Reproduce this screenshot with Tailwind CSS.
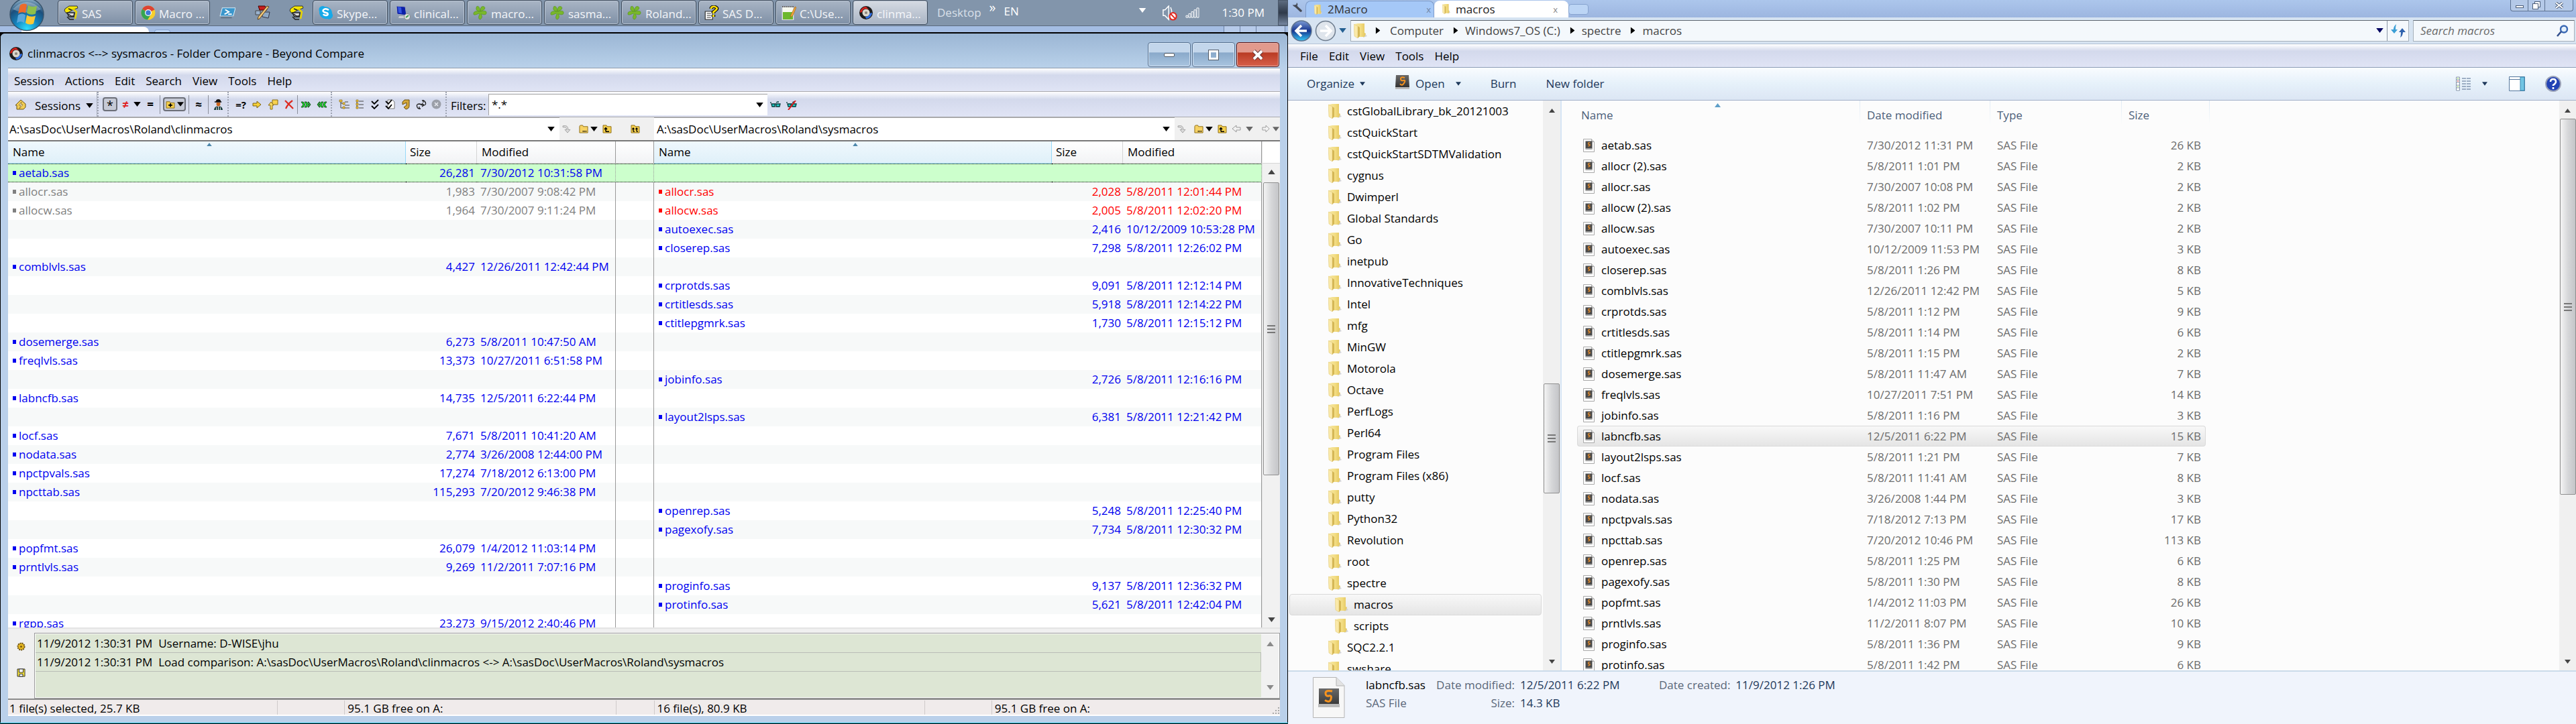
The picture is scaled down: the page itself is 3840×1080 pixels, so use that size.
<!DOCTYPE html>
<html lang="en">
<head>
<meta charset="utf-8">
<title>clinmacros &lt;--&gt; sysmacros - Folder Compare</title>
<script src="https://cdn.jsdelivr.net/npm/@tailwindcss/browser@4"></script>
</head>
<body class="h-screen overflow-hidden bg-[#fcfcfc] font-['Open_Sans','Noto_Sans',sans-serif] text-[17px] leading-6 text-black">

<!-- Icon sprite -->
<svg class="absolute h-0 w-0" aria-hidden="true">
  <defs>
    <linearGradient id="gFold" x1="0" x2="1"><stop offset="0" stop-color="#f6e7a4"/><stop offset=".55" stop-color="#f3dd83"/><stop offset="1" stop-color="#e3c55c"/></linearGradient>
    <radialGradient id="gOrb" cx=".5" cy=".95" r=".9"><stop offset="0" stop-color="#2fe0ff"/><stop offset=".4" stop-color="#1583bd"/><stop offset=".75" stop-color="#1c4f7c"/><stop offset="1" stop-color="#7fa3bd"/></radialGradient>
    <linearGradient id="gBack" x1="0" x2="0" y1="0" y2="1"><stop offset="0" stop-color="#7d9cd6"/><stop offset=".5" stop-color="#16358f"/><stop offset="1" stop-color="#35c8f5"/></linearGradient>
    <linearGradient id="gDark" x1="0" x2="0" y1="0" y2="1"><stop offset="0" stop-color="#6a6a6a"/><stop offset="1" stop-color="#333"/></linearGradient>
  </defs>
  <symbol id="tri" viewBox="0 0 12 8"><path d="M0 0h12L6 8z" fill="currentColor"/></symbol>
  <symbol id="triup" viewBox="0 0 12 8"><path d="M0 8h12L6 0z" fill="currentColor"/></symbol>
  <symbol id="orb" viewBox="0 0 52 48" preserveAspectRatio="none"><ellipse cx="26" cy="22" rx="25" ry="24.500" fill="url(#gOrb)" stroke="#38546c" stroke-width="1.500"/><path d="M5 14Q26-8 47 14 26 24 5 14z" fill="#fff" opacity=".3"/><path d="M16 8q5-4 10-1l-2 13q-6-3-11 1z" fill="#ec6a2c"/><path d="M28 8q6 4 13 1l-2 12q-7 3-13-1z" fill="#8fc04a"/><path d="M13 23q6-4 11 0l-2 12q-5-4-11 0z" fill="#5ba7dc"/><path d="M26 23q6 4 13 1l-3 12q-6 3-12-1z" fill="#fdc835"/></symbol>
  <symbol id="sas" viewBox="0 0 22 22" preserveAspectRatio="none"><path d="M2 5 8 1h12l1 3-8 3-9 5-3-4z" fill="#f4e600" stroke="#333"/><path d="M5 11h11l-1 6H8z" fill="#ddd" stroke="#222" stroke-width="1.600"/><path d="m7 5 5 2M7 13l4 3h5M5 17l4 4h6" stroke="#222" stroke-width="1.500" fill="none"/><path d="m14 5 5 5-2 10" stroke="#e6d300" stroke-width="2.500" fill="none"/></symbol>
  <symbol id="chrome" viewBox="0 0 22 22"><circle cx="11" cy="11" r="10.500" fill="#f7cf2d"/><path d="M11 11 2 5.500A10.500 10.500 0 0 1 20.500 6.500z" fill="#dd4332"/><path d="M11 11 2 5.500A10.500 10.500 0 0 0 10 21.500l5-8z" fill="#35a552"/><circle cx="11" cy="11" r="5" fill="#fff"/><circle cx="11" cy="11" r="3.800" fill="#3e79d6"/></symbol>
  <symbol id="psh" viewBox="0 0 22 22" preserveAspectRatio="none"><path d="M4 2h18l-3 14H1z" fill="#3a96cc" stroke="#d7ecf8"/><path d="m8 5 5 4-6 4M12 13h5" stroke="#fff" stroke-width="2" fill="none"/><path d="M2 19h15" stroke="#5d6f80" stroke-width="2"/></symbol>
  <symbol id="paint" viewBox="0 0 26 22" preserveAspectRatio="none"><path d="M3 8h7v6H3z" fill="#9ab3cf" stroke="#444"/><path d="M7 1h10l3 6H9z" fill="#c81f1c" stroke="#400"/><path d="M13 10h11l-2 9-9-2z" fill="#8fa9c4" stroke="#334"/><path d="M23 2 9 20l-3 1 1-4L20 1z" fill="#efc679" stroke="#5d4420"/></symbol>
  <symbol id="skype" viewBox="0 0 22 22" preserveAspectRatio="none"><path d="M6 1a5.500 5.500 0 0 0-5 8 10 10 0 0 0 12 11 5.500 5.500 0 0 0 7-8A10 10 0 0 0 9 2a5 5 0 0 0-3-1z" fill="#17a9e8"/><path d="M15 7q-4-3-7-1t0 4l5 1.500q2 3-2 3.500-3 0-4-2" stroke="#fff" stroke-width="2.600" fill="none"/></symbol>
  <symbol id="mon" viewBox="0 0 22 22" preserveAspectRatio="none"><path d="m1 1 13 1 2 13-14-2z" fill="#0c1fa8" stroke="#9fa8b8"/><path d="m3 2 5 1 1 9-5-1z" fill="#3456e2"/><path d="M5 16h9l2 3H4z" fill="#c8ccd2"/><circle cx="17" cy="17" r="4.500" fill="#dfe2e4" stroke="#888"/><path d="m15 18 4-3" stroke="#3a9a4a" stroke-width="2"/></symbol>
  <symbol id="clover" viewBox="0 0 24 24" preserveAspectRatio="none"><g fill="#79b82b" stroke="#4f8c17" stroke-width=".6"><path d="M11 10Q3 9 6 2q4-3 6 7 0-9 6-7 5 4-6 8z"/><path d="M11 10Q2 8 1 13t9 0l1 1q-4 8 1 9 5-4 1-9 9 3 9-2t-10-2z"/></g></symbol>
  <symbol id="qdoc" viewBox="0 0 18 22" preserveAspectRatio="none"><path d="M1 9h9v12H1z" fill="#fff" stroke="#333"/><path d="M3 12h5M3 15h5M3 18h5" stroke="#333"/><path d="M8 5q1-4 5-3 4 2 1 5l-3 3v2M11 14v3" stroke="#000" stroke-width="4.500" fill="none"/><path d="M8 5q1-4 5-3 4 2 1 5l-3 3v2M11 14v3" stroke="#fd0" stroke-width="2.500" fill="none"/></symbol>
  <symbol id="npp" viewBox="0 0 22 22" preserveAspectRatio="none"><path d="M1 2h17v20H1z" fill="#f6f8ef" stroke="#ccd"/><path d="M2 10h15v11H2z" fill="#6db82e"/><path d="M1 2h17" stroke="#666" stroke-width="2" stroke-dasharray="2 1"/><path d="M20 2 14 14l-1 4 4-3 5-12z" fill="#f0a63a" stroke="#9a5d12" stroke-width=".6"/></symbol>
  <symbol id="bc" viewBox="0 0 22 22" preserveAspectRatio="none"><circle cx="11" cy="11" r="10" fill="#1b1b1b"/><path d="M11 2A9 9 0 0 0 2 11l3-1a6 6 0 0 1 6-5l4 1z" fill="#d9221c"/><path d="M20 11a9 9 0 0 1-9 9l-1-3a6 6 0 0 0 6-5z" fill="#2f6fe6"/><circle cx="11" cy="11" r="5.500" fill="#d9d6cc"/><circle cx="11" cy="11" r="2" fill="#8a857a"/></symbol>
  <symbol id="vol" viewBox="0 0 24 24" preserveAspectRatio="none"><path d="M1 7h3l6-6v21l-6-6H1zM13 3q4 8 0 17" fill="none" stroke="#fff" stroke-width="1.600"/><circle cx="17" cy="17" r="5.500" fill="#fff" stroke="#e3271f" stroke-width="2.200"/><path d="m13 13 8 8" stroke="#e3271f" stroke-width="2.200"/></symbol>
  <symbol id="sig" viewBox="0 0 22 17" preserveAspectRatio="none"><path d="M1 13h3v3H1zM5 10h3v6H5zM9 7h3v9H9zM13 4h3v12h-3zM17 1h3v15h-3z" fill="none" stroke="#fff"/></symbol>
  <symbol id="folder" viewBox="0 0 20 22" preserveAspectRatio="none"><path d="m14 12 6 7-6 2z" fill="#d4d4d4"/><path d="M1 1 6 0h10v14l2 1-2 5H6z" fill="url(#gFold)"/><path d="m0 1 6 3v18l-5-3z" fill="#fae9a8" stroke="#dcc478" stroke-width=".5"/><path d="M6 4v18l3-3V6z" fill="#d5b755"/></symbol>
  <symbol id="file" viewBox="0 0 17 20" preserveAspectRatio="none"><path d="M.5.5h12l4 4v15H.5z" fill="#fcfcfc" stroke="#a9a9a9"/><path d="M12.500.5v4h4" fill="#ddd" stroke="#aaa"/><path d="M3.500 3.500h10v11h-10z" fill="#4a4a4a"/><path d="M3.500 14h10v2h-10z" fill="#a3a3a3"/><path d="M10.500 6q-3-1-3 1t2.500 1.500Q11 11 7 11" stroke="#f0902a" stroke-width="1.200" fill="none"/></symbol>
  <symbol id="bigfile" viewBox="0 0 48 61" preserveAspectRatio="none"><path d="M.5.5H35l12 12v48H.5z" fill="#f7f7f7" stroke="#b4b4b4"/><path d="M35 .5V13h12" fill="#e3e3e3" stroke="#b4b4b4"/><path d="M9 17h30v27H9z" fill="url(#gDark)"/><path d="M8 40h32v5H8z" fill="#bbb"/><path d="M29 21q-10-2-10 3t5 4 3 5-9 1.500" stroke="#f7931e" stroke-width="3" fill="none"/></symbol>
  <symbol id="sopen" viewBox="0 0 23 22" preserveAspectRatio="none"><path d="M2 0h19l1 18H1z" fill="url(#gDark)"/><path d="M1 18h21v3H1z" fill="#b9b9b9"/><path d="M15 4q-6-2-6 1.500t4 2.500 1 4-6 1" stroke="#f7931e" stroke-width="2" fill="none"/></symbol>
  <symbol id="house" viewBox="0 0 18 16" preserveAspectRatio="none"><path d="M9 1 1 9h2v6h10l3-3V7z" fill="#f2cd55" stroke="#6d5415"/><path d="M10 4 6 9h3l-2 5 5-6H9z" fill="#fff" stroke="#7a5c10" stroke-width=".7"/></symbol>
  <symbol id="fplus" viewBox="0 0 14 14" preserveAspectRatio="none"><path d="M1 2h5l1 2h6v9H1z" fill="#f4cf4c" stroke="#8d6c17"/><path d="M7 5v6M4 8h6" stroke="#000" stroke-width="1.800"/></symbol>
  <symbol id="fup" viewBox="0 0 14 14" preserveAspectRatio="none"><path d="M1 1h5l1 2h6v10H1z" fill="#f4cf4c" stroke="#8d6c17"/><path d="M5 11V6M3 7.500 5 5l2 2.500M5 11h5" stroke="#000" stroke-width="1.500" fill="none"/></symbol>
  <symbol id="fupup" viewBox="0 0 14 14" preserveAspectRatio="none"><path d="M1 1h5l1 2h6v10H1z" fill="#f4cf4c" stroke="#8d6c17"/><path d="M4 11V6M2.500 7.500 4 5.500l1.500 2M4 11h2M9 11V6M7.500 7.500 9 5.500l1.500 2M9 11h2" stroke="#000" stroke-width="1.300" fill="none"/></symbol>
  <symbol id="person" viewBox="0 0 16 17" preserveAspectRatio="none"><path d="M4 5q0-4 4-4t4 4z" fill="#111"/><path d="M2 5h11" stroke="#111" stroke-width="1.500"/><path d="M5 6h6v4q-3 3-6 0z" fill="#c9631c"/><path d="M1 17q1-6 7-5 6-1 7 5z" fill="#163a3a"/><path d="M5 13v4M8 12v5M11 13v4" stroke="#eee"/></symbol>
  <symbol id="rarrow" viewBox="0 0 14 12" preserveAspectRatio="none"><path d="M1 4h6V1l6 5-6 5V8H1z" fill="#f6d038" stroke="#7c6210"/></symbol>
  <symbol id="farrow" viewBox="0 0 16 16" preserveAspectRatio="none"><path d="M7 1h8v7H7z" fill="#f7d250" stroke="#8a6b15"/><path d="m1 9 4-5 4 5H7v6H4V9z" fill="#f9dc61" stroke="#8a6b15"/></symbol>
  <symbol id="redx" viewBox="0 0 14 14" preserveAspectRatio="none"><path d="m1 1 12 12M12 1Q5 6 2 13" stroke="#dd2a20" stroke-width="2.200" fill="none"/></symbol>
  <symbol id="right3" viewBox="0 0 16 10" preserveAspectRatio="none"><path d="m1 1 3 4-3 4h3l3-4-3-4zM6 1l3 4-3 4h3l3-4-3-4zM11 1h1l3 4-3 4h-1l2-4z" fill="#18e02a" stroke="#06340a" stroke-width=".8"/></symbol>
  <symbol id="left3" viewBox="0 0 16 10" preserveAspectRatio="none"><path d="m15 1-3 4 3 4h-3L9 5l3-4zM10 1 7 5l3 4H7L4 5l3-4zM5 1H4L1 5l3 4h1L3 5z" fill="#18e02a" stroke="#06340a" stroke-width=".8"/></symbol>
  <symbol id="tree" viewBox="0 0 16 15" preserveAspectRatio="none"><path d="M3 3v10h5M3 6h5M9 9h7M9 13h7M9 4h5" stroke="#444" fill="none"/><path d="M1 1h4v3H1zM6 5h3v3H6zM6 11h3v3H6z" fill="#f4c63c" stroke="#8a6b15" stroke-width=".7"/></symbol>
  <symbol id="tree2" viewBox="0 0 12 15" preserveAspectRatio="none"><path d="M5 3h7M5 8h7M5 13h7M2 3v10" stroke="#444"/><path d="M1 1h3v3H1zM1 6h3v3H1zM1 11h3v3H1z" fill="#f4c63c" stroke="#8a6b15" stroke-width=".7"/></symbol>
  <symbol id="checks" viewBox="0 0 12 15" preserveAspectRatio="none"><path d="m1 3 4 4 6-6M1 10l4 4 6-6" stroke="#000" stroke-width="1.800" fill="none"/></symbol>
  <symbol id="dchecks" viewBox="0 0 15 15" preserveAspectRatio="none"><path d="M4 1h7l3 3v10H4z" fill="#fff" stroke="#777"/><path d="m1 3 4 4 5-6M1 10l4 4 5-6" stroke="#000" stroke-width="1.800" fill="none"/></symbol>
  <symbol id="undo" viewBox="0 0 12 16" preserveAspectRatio="none"><path d="M4 1h7v9q0 4-5 5L3 12l4-3V5L1 8V4z" fill="#d5a83a" stroke="#6b4f10"/></symbol>
  <symbol id="cycle" viewBox="0 0 16 14" preserveAspectRatio="none"><path d="M2 11q-2-5 3-5l4 1M14 3q2 5-3 5L7 7M9 1q4-1 5 3M7 13q-4 1-5-2M9 5l3 3-3 2M5 10v4M11 0v4" stroke="#222" stroke-width="1.300" fill="none"/></symbol>
  <symbol id="stop" viewBox="0 0 15 15"><circle cx="7.500" cy="7.500" r="7" fill="#9b9fa8"/><path d="m5 5 5 5M10 5l-5 5" stroke="#e6e8ee" stroke-width="1.600"/></symbol>
  <symbol id="glass" viewBox="0 0 16 9" preserveAspectRatio="none"><path d="M1 3V1M2 4h5v4H3zM9 4h6l-1 4H9zM7 4h2M9 2l2-1h2" fill="#21cfc9" stroke="#063a3a" stroke-width="1.300"/></symbol>
  <symbol id="darrow" viewBox="0 0 14 14" preserveAspectRatio="none"><path d="M1 2q8-2 8 6h3l-4 5-4-5h3Q7 4 1 4z" fill="#dcdcdc" stroke="#a3a3a3"/></symbol>
  <symbol id="fold" viewBox="0 0 15 14" preserveAspectRatio="none"><path d="M1 3q0-2 2-2h3l1 2h7v10H1z" fill="#f6d264" stroke="#8a6b15"/><path d="M6 10.500h6" stroke="#000" stroke-width="1.500" stroke-dasharray="1.500 .8"/></symbol>
  <symbol id="outarrow" viewBox="0 0 14 12" preserveAspectRatio="none"><path d="M13 4H7V1L1 6l6 5V8h6z" fill="#f2f2f2" stroke="#999"/></symbol>
  <symbol id="gear" viewBox="0 0 13 13"><circle cx="6.500" cy="6.500" r="5" fill="#e8b922" stroke="#6e5210" stroke-width="2" stroke-dasharray="2 1"/><circle cx="6.500" cy="6.500" r="1.600" fill="#7b5c12"/></symbol>
  <symbol id="save" viewBox="0 0 13 13"><path d="M1 1h11v11H1z" fill="#f5e23a" stroke="#333"/><path d="M3.500 1h6v5h-6zM4 8.500h5V12H4z" fill="#fff" stroke="#333"/></symbol>
  <symbol id="wrench" viewBox="0 0 16 16" preserveAspectRatio="none"><path d="M5 6 13 14" stroke="#444a55" stroke-width="3.500" stroke-linecap="round"/><path d="M1 4a4 4 0 0 0 6 3 4 4 0 0 0 0-6L6 5H3z" fill="#444a55"/></symbol>
</svg>

<div class="flex h-full w-full">

  <!-- Left monitor -->
  <section class="flex min-w-0 flex-1 flex-col overflow-hidden bg-black">

    <!-- Taskbar -->
    <nav class="relative z-10 flex h-[38px] shrink-0 items-stretch bg-[#8295ab] pl-[86px] text-[#f4f6fa]">
      <button aria-label="Start" class="absolute left-[14px] top-0 h-[47px] w-[52px]"><svg class="h-[47px] w-[52px]"><use href="#orb"/></svg></button>
      <div class="flex gap-[3px]" id="tasks1"></div>
      <div class="flex w-[153px] items-center justify-around">
        <button aria-label="PowerShell"><svg class="h-[19px] w-6"><use href="#psh"/></svg></button>
        <button aria-label="Paint"><svg class="h-[22px] w-[26px]"><use href="#paint"/></svg></button>
        <button aria-label="SAS"><svg class="h-[22px] w-[22px]"><use href="#sas"/></svg></button>
      </div>
      <div class="flex gap-[3px]" id="tasks2"></div>
      <div class="ml-[14px] flex items-center gap-3 text-[#d9e0e9]"><span>Desktop</span><span class="pb-4 text-[20px] text-white">»</span><span class="pb-1 text-white">EN</span></div>
      <div class="ml-auto flex items-center text-white">
        <svg class="mb-2 mr-6 h-[7px] w-3"><use href="#tri"/></svg>
        <svg class="mr-3 h-[23px] w-[22px]"><use href="#vol"/></svg>
        <svg class="mr-8 h-4 w-[22px]"><use href="#sig"/></svg>
        <time class="mr-5">1:30 PM</time>
        <button aria-label="Show desktop" class="h-[38px] w-[15px] border border-[#4a586a] bg-linear-to-b from-[#5d6c80] via-[#2f3a4a] to-[#7687a0]"></button>
      </div>
    </nav>

    <!-- Strip of the window behind -->
    <div class="flex h-[10px] shrink-0 items-end border-t border-[#5b6b80] bg-[#a4bde3] pl-8">
      <div class="h-2 w-[190px] rounded-t-lg bg-white"></div>
      <div class="ml-2 h-1 w-6 rounded-t border border-b-0 border-[#88a5d0] bg-[#bcd4f3]"></div>
      <div class="ml-auto mr-1 flex h-[9px] w-[92px] divide-x divide-[#6d82a5] border-x border-[#6d82a5] bg-[#b7cbea]"><span class="w-6"></span><span class="w-6"></span><span class="flex-1"></span></div>
    </div>

    <!-- Beyond Compare -->
    <main class="flex min-h-0 flex-1 flex-col rounded-t-lg border-x border-t-2 border-black bg-[#bad0ea]">
      <header class="flex h-[51px] shrink-0 items-center rounded-t-md bg-linear-to-b from-[#9bb6d4] to-[#b9d1ea] pl-3 pr-3">
        <svg class="mt-2 h-[22px] w-[22px]"><use href="#bc"/></svg>
        <h1 class="ml-[6px] mt-2">clinmacros &lt;--&gt; sysmacros - Folder Compare - Beyond Compare</h1>
        <div class="ml-auto mt-3 flex gap-[2px]">
          <button aria-label="Minimize" class="flex h-[37px] w-16 items-center justify-center rounded-sm border border-[#56708f] bg-linear-to-b from-[#c3d6eb] from-40% via-[#8aa9ca] via-42% to-[#a9c5e0] shadow-[inset_0_0_0_1px_#d6e5f4]"><span class="h-[6px] w-4 rounded-xs border border-[#535b66] bg-white"></span></button>
          <button aria-label="Maximize" class="flex h-[37px] w-16 items-center justify-center rounded-sm border border-[#56708f] bg-linear-to-b from-[#c3d6eb] from-40% via-[#8aa9ca] via-42% to-[#a9c5e0] shadow-[inset_0_0_0_1px_#d6e5f4]"><span class="h-4 w-4 border border-[#535b66] p-[3px] shadow-[inset_0_0_0_3px_#fff]"></span></button>
          <button aria-label="Close" class="flex h-[37px] w-16 items-center justify-center rounded-sm border border-[#5a1212] bg-linear-to-b from-[#e29a8d] from-40% via-[#b93a22] via-42% to-[#d7604b] shadow-[inset_0_0_0_1px_#eab2a8]"><svg viewBox="0 0 18 16" class="h-4 w-[18px]"><path d="m3 2 12 12M15 2 3 14" stroke="#5c3030" stroke-width="6"/><path d="m3 2 12 12M15 2 3 14" stroke="#fff" stroke-width="4"/></svg></button>
        </div>
      </header>

      <div class="mx-[11px] mb-[10px] flex min-h-0 flex-1 flex-col overflow-hidden border-t border-[#8f9cad] bg-[#f0f0f0]">
        <!-- Menu -->
        <nav class="flex h-[35px] shrink-0 items-center gap-4 border-b border-[#a9a9ad] bg-linear-to-b from-white via-[#d3d9ec] via-30% to-[#e0e4f5] pl-[9px] pt-1">
          <button>Session</button><button>Actions</button><button>Edit</button><button>Search</button><button>View</button><button>Tools</button><button>Help</button>
        </nav>

        <!-- Toolbar -->
        <div class="flex h-[38px] shrink-0 items-center border-b border-[#a9a9ad] bg-linear-to-b from-white via-[#d3d9ec] via-30% to-[#e0e4f5]">
          <div class="flex h-full w-[133px] items-center border-r border-[#a9aebc] pl-[10px]">
            <svg class="h-4 w-[18px]"><use href="#house"/></svg>
            <button class="ml-3 flex items-center gap-2 pt-1">Sessions<svg class="h-[7px] w-[11px] shrink-0"><use href="#tri"/></svg></button>
          </div>
          <div class="flex h-full w-[194px] items-center border-l-2 border-dotted border-[#9ea3b2] pl-[6px]">
            <button class="h-[21px] w-[22px] rounded border-2 border-[#6c6f78] bg-[#c6cad6] text-[18px] leading-5">*</button>
            <button class="w-6 font-bold text-[#e02020]">≠</button>
            <button aria-label="Differences menu" class="w-[11px]"><svg class="h-[7px] w-[11px]"><use href="#tri"/></svg></button>
            <button class="w-7 font-bold">=</button>
            <span class="mr-1 h-7 w-px bg-[#8b8f9b]"></span>
            <button aria-label="Folder view" class="flex h-[21px] w-[34px] items-center justify-around rounded border-2 border-[#6c6f78] bg-[#c6cad6]"><svg class="h-3 w-[14px]"><use href="#fplus"/></svg><svg class="h-[7px] w-[10px]"><use href="#tri"/></svg></button>
            <span class="ml-1 h-7 w-px bg-[#8b8f9b]"></span>
            <button class="w-7 font-bold">≈</button>
            <span class="h-7 w-px bg-[#8b8f9b]"></span>
            <button aria-label="Rules" class="flex w-7 justify-center"><svg class="h-[17px] w-[15px]"><use href="#person"/></svg></button>
          </div>
          <div class="flex h-full w-[154px] items-center border-l-2 border-dotted border-[#9ea3b2] pl-[6px]">
            <button class="w-6 text-[15px] font-bold">=?</button>
            <button aria-label="Copy" class="flex w-6 justify-center"><svg class="h-3 w-[14px]"><use href="#rarrow"/></svg></button>
            <button aria-label="Copy to folder" class="flex w-6 justify-center"><svg class="h-4 w-4"><use href="#farrow"/></svg></button>
            <button aria-label="Delete" class="flex w-6 justify-center"><svg class="h-[14px] w-[14px]"><use href="#redx"/></svg></button>
            <span class="h-7 w-px bg-[#8b8f9b]"></span>
            <button aria-label="Mirror right" class="flex w-6 justify-center"><svg class="h-[10px] w-4"><use href="#right3"/></svg></button>
            <button aria-label="Mirror left" class="flex w-6 justify-center"><svg class="h-[10px] w-4"><use href="#left3"/></svg></button>
          </div>
          <div class="flex h-full w-[171px] items-center border-l-2 border-dotted border-[#9ea3b2] pl-[6px]">
            <button aria-label="Expand all" class="flex w-[23px] justify-center"><svg class="h-[15px] w-4"><use href="#tree"/></svg></button>
            <button aria-label="Collapse all" class="flex w-[23px] justify-center"><svg class="h-[15px] w-3"><use href="#tree2"/></svg></button>
            <button aria-label="Select all" class="flex w-[23px] justify-center"><svg class="h-[15px] w-3"><use href="#checks"/></svg></button>
            <button aria-label="Select files" class="flex w-[23px] justify-center"><svg class="h-[15px] w-[15px]"><use href="#dchecks"/></svg></button>
            <button aria-label="Refresh" class="flex w-[23px] justify-center"><svg class="h-4 w-3"><use href="#undo"/></svg></button>
            <button aria-label="Swap sides" class="flex w-[23px] justify-center"><svg class="h-[14px] w-4"><use href="#cycle"/></svg></button>
            <button aria-label="Stop" class="flex w-[23px] justify-center"><svg class="h-[15px] w-[15px]"><use href="#stop"/></svg></button>
          </div>
          <div class="flex h-full items-center border-l-2 border-dotted border-[#9ea3b2] pl-[6px]">
            <label for="filters" class="w-14 pt-1">Filters:</label>
            <div class="flex h-8 w-[416px] items-center border-l border-t border-[#a2a2a2] bg-white pr-[6px]">
              <input id="filters" value="*.*" class="min-w-0 flex-1 bg-transparent pl-1 outline-none">
              <svg class="h-[7px] w-[11px]"><use href="#tri"/></svg>
            </div>
            <button aria-label="Show filters" class="ml-1"><svg class="h-[9px] w-4"><use href="#glass"/></svg></button>
            <button aria-label="Hide filters" class="relative ml-2"><svg class="h-[9px] w-4"><use href="#glass"/></svg><svg viewBox="0 0 16 14" class="absolute -top-px left-0 h-[14px] w-4"><path d="M3 14 14 0" stroke="#e01818" stroke-width="2"/></svg></button>
          </div>
        </div>

        <!-- Paths -->
        <div class="flex h-9 shrink-0 items-stretch border-b-2 border-[#777]">
          <div class="flex flex-1">
            <div class="flex flex-1 items-center border-t border-[#a8a8a8] bg-white pr-[7px]">
              <input aria-label="Left folder" value="A:\sasDoc\UserMacros\Roland\clinmacros" class="min-w-0 flex-1 bg-transparent pl-[2px] outline-none"><svg class="h-[7px] w-[11px]"><use href="#tri"/></svg>
            </div>
            <div class="flex w-[84px] items-center gap-[7px] pl-1">
              <svg class="h-[13px] w-[14px]"><use href="#darrow"/></svg><svg class="ml-1 h-[13px] w-[14px]"><use href="#fold"/></svg><svg class="-ml-1 h-[7px] w-[11px]"><use href="#tri"/></svg><svg class="h-[13px] w-[14px]"><use href="#fup"/></svg>
            </div>
          </div>
          <div class="flex w-[57px] items-center justify-center"><svg class="h-[13px] w-[14px]"><use href="#fupup"/></svg></div>
          <div class="flex flex-1">
            <div class="flex flex-1 items-center border-t border-[#a8a8a8] bg-white pr-[7px]">
              <input aria-label="Right folder" value="A:\sasDoc\UserMacros\Roland\sysmacros" class="min-w-0 flex-1 bg-transparent pl-1 outline-none"><svg class="h-[7px] w-[11px]"><use href="#tri"/></svg>
            </div>
            <div class="flex w-[130px] items-center gap-[7px] pl-1">
              <svg class="h-[13px] w-[14px]"><use href="#darrow"/></svg><svg class="ml-1 h-[13px] w-[14px]"><use href="#fold"/></svg><svg class="-ml-1 h-[7px] w-[11px]"><use href="#tri"/></svg><svg class="h-[13px] w-[14px]"><use href="#fup"/></svg><svg class="h-3 w-[14px]"><use href="#outarrow"/></svg><svg class="h-[7px] w-[11px] text-[#666]"><use href="#tri"/></svg>
            </div>
          </div>
          <div class="flex w-[27px] items-center gap-1"><svg class="h-3 w-3 rotate-180"><use href="#outarrow"/></svg><svg class="h-[7px] w-[10px] text-[#666]"><use href="#tri"/></svg></div>
        </div>

        <!-- Comparison -->
        <div class="flex min-h-0 flex-1 overflow-hidden bg-white">
          <div class="min-w-0 flex-1 overflow-hidden">
            <table class="w-full table-fixed border-separate border-spacing-0">
              <colgroup><col><col class="w-[106px]"><col class="w-[207px]"><col class="w-[57px]"><col><col class="w-[106px]"><col class="w-[207px]"></colgroup>
              <thead>
                <tr class="h-[33px] text-left">
                  <th class="relative border-b border-r border-[#96d9f9] bg-linear-to-b from-[#eff8fd] to-[#dff0f9] pl-[7px] font-normal">Name<svg class="absolute left-1/2 top-[2px] h-[5px] w-2 text-[#4d87ab]"><use href="#triup"/></svg></th>
                  <th class="border-b border-r border-[#d5d5d5] bg-linear-to-b from-white to-[#f2f3f5] pl-[6px] font-normal">Size</th>
                  <th class="border-b border-r border-b-[#d5d5d5] border-r-[#999] bg-linear-to-b from-white to-[#f2f3f5] pl-[7px] font-normal">Modified</th>
                  <th class="border-b border-r border-b-[#d5d5d5] border-r-[#999] bg-linear-to-b from-white to-[#f2f3f5]"></th>
                  <th class="relative border-b border-r border-[#96d9f9] bg-linear-to-b from-[#eff8fd] to-[#dff0f9] pl-[7px] font-normal">Name<svg class="absolute left-1/2 top-[2px] h-[5px] w-2 text-[#4d87ab]"><use href="#triup"/></svg></th>
                  <th class="border-b border-r border-[#d5d5d5] bg-linear-to-b from-white to-[#f2f3f5] pl-[6px] font-normal">Size</th>
                  <th class="border-b border-r border-b-[#d5d5d5] border-r-[#999] bg-linear-to-b from-white to-[#f2f3f5] pl-[7px] font-normal">Modified</th>
                </tr>
              </thead>
              <tbody id="cmp"></tbody>
            </table>
          </div>
          <div class="flex w-[27px] flex-col items-center border-l border-[#e2e2e2] bg-[#f1f1f1]">
            <div class="h-[33px] w-full shrink-0 border-b border-[#d5d5d5] bg-white"></div>
            <svg class="mt-[9px] h-[7px] w-[11px] shrink-0 text-[#444]"><use href="#triup"/></svg>
            <div class="mt-3 flex h-[437px] w-6 flex-col items-center justify-center gap-[3px] rounded-xs border border-[#8f8f8f] bg-linear-to-r from-[#f4f4f4] via-[#d6d7d9] to-[#c4c5c8]"><i class="h-[2px] w-3 bg-[#777]"></i><i class="h-[2px] w-3 bg-[#777]"></i><i class="h-[2px] w-3 bg-[#777]"></i></div>
            <svg class="mb-2 mt-auto h-[7px] w-[11px] shrink-0 text-[#444]"><use href="#tri"/></svg>
          </div>
        </div>

        <!-- Log -->
        <div class="flex h-[108px] shrink-0 border-b-2 border-t-2 border-b-[#8d8d8d] border-t-[#e4e4e4] pt-[6px]">
          <div class="flex w-[39px] flex-col items-center gap-[26px] pt-[14px]"><svg class="h-[13px] w-[13px]"><use href="#gear"/></svg><svg class="h-[13px] w-[13px]"><use href="#save"/></svg></div>
          <div class="flex flex-1 border border-[#9a9a9a] bg-white p-px">
            <div class="flex-1 bg-[#dde6d4]">
              <p class="h-7 border-b border-[#b9bdb6] pl-[2px] leading-7">11/9/2012 1:30:31 PM&nbsp; Username: D-WISE\jhu</p>
              <p class="h-7 border-b border-r border-[#b9bdb6] pl-[2px] leading-7">11/9/2012 1:30:31 PM&nbsp; Load comparison: A:\sasDoc\UserMacros\Roland\clinmacros &lt;-&gt; A:\sasDoc\UserMacros\Roland\sysmacros</p>
            </div>
            <div class="flex w-[26px] flex-col items-center justify-between bg-[#f1f1f1] py-[11px] text-[#8a8a8a]"><svg class="h-[7px] w-[11px]"><use href="#triup"/></svg><svg class="h-[7px] w-[11px]"><use href="#tri"/></svg></div>
          </div>
        </div>

        <!-- Status -->
        <footer class="flex h-6 shrink-0 border-b-2 border-white bg-[#f0ebeb] pt-px">
          <div class="flex flex-1 divide-x divide-[#cfcaca] border-r border-[#cfcaca]"><span class="flex-1 pl-[2px]">1 file(s) selected, 25.7 KB</span><span class="w-[100px]"></span><span class="flex-1 pl-1">95.1 GB free on A:</span></div>
          <div class="w-[57px] border-r border-[#cfcaca]"></div>
          <div class="flex flex-1 divide-x divide-[#cfcaca]"><span class="flex-1 pl-1">16 file(s), 80.9 KB</span><span class="w-[100px]"></span><span class="flex-1 pl-1">95.1 GB free on A:</span></div>
          <div class="flex w-[27px] items-end justify-end"><svg viewBox="0 0 12 12" class="h-3 w-3"><path d="M9 1h2v2H9zM9 5h2v2H9zM9 9h2v2H9zM5 5h2v2H5zM5 9h2v2H5zM1 9h2v2H1z" fill="#aaa"/></svg></div>
        </footer>
      </div>
    </main>
    <div class="h-[2px] shrink-0 border-b border-black bg-[#22c3dc]"></div>
  </section>

  <!-- Right monitor: Explorer -->
  <section class="flex min-w-0 flex-1 flex-col overflow-hidden bg-[#fcfcfc]">
    <header class="flex h-[26px] shrink-0 items-end bg-linear-to-b from-[#acc6ec] to-[#9db6e0] pl-[6px]">
      <svg class="mb-2 h-[15px] w-4"><use href="#wrench"/></svg>
      <a href="#" class="ml-1 flex h-[25px] w-[192px] items-center rounded-t-lg border border-b-0 border-[#7f9cc9] bg-[#a5c8f7] pl-3 text-[#333]"><svg class="h-[15px] w-3"><use href="#folder"/></svg><span class="ml-2">2Macro</span><span class="ml-auto mr-1 text-[13px] text-[#7086a6]">x</span></a>
      <a href="#" class="flex h-[25px] w-[200px] items-center rounded-t-lg bg-white pl-3 text-[#222]"><svg class="h-[15px] w-3"><use href="#folder"/></svg><span class="ml-2">macros</span><span class="ml-auto mr-4 text-[13px] text-[#888]">x</span></a>
      <button aria-label="New tab" class="mb-1 h-4 w-[30px] rounded border border-[#86a3cf] bg-[#bcd5f5]"></button>
      <div class="ml-auto mr-1 flex h-[17px] self-start divide-x divide-[#5f7494] rounded-b border border-t-0 border-[#5f7494] bg-[#b4c9e8]">
        <button aria-label="Minimize" class="flex w-[26px] items-end justify-center pb-1"><span class="h-1 w-3 border border-[#4d5e78] bg-white"></span></button>
        <button aria-label="Restore" class="relative w-[25px]"><span class="absolute left-[9px] top-[2px] h-[9px] w-[9px] border border-[#4d5e78] bg-white"></span><span class="absolute left-[6px] top-[5px] h-[9px] w-[9px] border border-[#4d5e78] bg-white"></span></button>
        <button aria-label="Close" class="flex w-[41px] items-center justify-center"><svg viewBox="0 0 12 10" class="h-[10px] w-3"><path d="m1 1 10 8M11 1 1 9" stroke="#4d5e78" stroke-width="4"/><path d="m1 1 10 8M11 1 1 9" stroke="#fff" stroke-width="2"/></svg></button>
      </div>
    </header>

    <!-- Address bar -->
    <div class="flex h-10 shrink-0 items-center border-b border-[#b4c2d4] bg-[#d7e4f2] pl-1 pr-[2px]">
      <button aria-label="Back"><svg viewBox="0 0 32 32" class="h-8 w-8"><circle cx="16" cy="16" r="15" fill="url(#gBack)" stroke="#5c718e" stroke-width="1.500"/><path d="M24 16H9M16 8l-8 8 8 8" stroke="#fff" stroke-width="3.500" fill="none"/></svg></button>
      <button aria-label="Forward" class="ml-1"><svg viewBox="0 0 32 32" class="h-8 w-8"><circle cx="16" cy="16" r="14.500" fill="#dfe5ec" stroke="#6e7c8e" stroke-width="1.500"/><path d="M8 16h15M16 8l8 8-8 8" stroke="#fff" stroke-width="3.500" fill="none"/></svg></button>
      <svg class="ml-1 h-[7px] w-[11px] text-[#235f92]"><use href="#tri"/></svg>
      <div class="ml-[6px] flex h-8 flex-1 items-center border border-[#a6b0ba] border-t-[#5d6670] bg-[#f4f8fc] text-[#444]">
        <svg class="ml-1 h-[22px] w-5"><use href="#folder"/></svg>
        <svg class="ml-[10px] h-[7px] w-3 -rotate-90 text-black"><use href="#tri"/></svg><a href="#" class="ml-3">Computer</a>
        <svg class="ml-3 h-[7px] w-3 -rotate-90 text-black"><use href="#tri"/></svg><a href="#" class="ml-2">Windows7_OS (C:)</a>
        <svg class="ml-3 h-[7px] w-3 -rotate-90 text-black"><use href="#tri"/></svg><a href="#" class="ml-2">spectre</a>
        <svg class="ml-3 h-[7px] w-3 -rotate-90 text-black"><use href="#tri"/></svg><a href="#" class="ml-2">macros</a>
        <svg class="ml-auto mr-[5px] h-[7px] w-[11px] text-[#000060]"><use href="#tri"/></svg>
        <button aria-label="Refresh" class="flex h-full w-8 items-center justify-center border-l border-[#8b97a5]"><svg viewBox="0 0 22 20" class="h-5 w-[22px]"><path d="M8 0Q4 3 4 8H0l5 6 5-6H7Q7 3 8 0z" fill="#3c9fd6"/><path d="M14 20q4-3 4-8h4l-5-6-5 6h3q0 5-1 8z" fill="#2f62ae"/></svg></button>
      </div>
      <div class="ml-[6px] flex h-8 w-[241px] items-center border border-[#a6b0ba] border-t-[#5d6670] bg-[#f4f8fc] pl-[10px] pr-2">
        <input type="search" aria-label="Search macros" placeholder="Search macros" class="min-w-0 flex-1 bg-transparent italic outline-none placeholder:text-[#6a6a6a]">
        <svg viewBox="0 0 18 18" class="h-[18px] w-[18px]"><circle cx="11" cy="6.500" r="5" fill="#e4f0fa" stroke="#3a68b4" stroke-width="2.400"/><path d="m7 10-6 7" stroke="#34508e" stroke-width="2.600"/></svg>
      </div>
    </div>

    <nav class="flex h-[35px] shrink-0 items-center gap-4 border-b border-[#8b9cb5] bg-linear-to-b from-white via-[#d3d9ec] via-30% to-[#e0e4f5] pl-[18px] pt-[2px]">
      <button>File</button><button>Edit</button><button>View</button><button>Tools</button><button>Help</button>
    </nav>

    <div class="flex h-[49px] shrink-0 items-center border-b border-[#a2b0c8] bg-linear-to-b from-[#f9fcff] via-[#e6f1fa] via-50% to-[#dce6f4] pl-7 text-[#1e395b]">
      <button class="flex items-center gap-2">Organize<svg class="h-[6px] w-2"><use href="#tri"/></svg></button>
      <button class="ml-11 flex items-center"><svg class="mb-1 mr-2 h-[22px] w-[23px]"><use href="#sopen"/></svg>Open<svg class="ml-4 h-[6px] w-2"><use href="#tri"/></svg></button>
      <button class="ml-11">Burn</button>
      <button class="ml-11">New folder</button>
      <div class="ml-auto flex items-center pr-[22px]">
        <button aria-label="Change view" class="flex items-center"><svg viewBox="0 0 23 22" class="h-[22px] w-[23px]"><path d="M.5 1h5v20h-5zM.5 5h5M.5 9h5M.5 13h5M.5 17h5" fill="#fff" stroke="#8796ab"/><path d="M2 3h2M2 15h2" stroke="#7c3"/><path d="M2 7h2" stroke="#d33"/><path d="M9 3h14M9 7h14M9 11h14M9 15h14M9 19h14" stroke="#506a8c" stroke-dasharray="6 1"/></svg><svg class="ml-4 h-[6px] w-2"><use href="#tri"/></svg></button>
        <button aria-label="Preview pane" class="ml-8"><svg viewBox="0 0 24 22" class="h-[22px] w-6"><path d="M.5.5h23v21H.5z" fill="#fff" stroke="#56789e"/><path d="M.5 4.500h17" stroke="#56789e"/><path d="M17 1h6v20h-6z" fill="#72c5e4" stroke="#3a8cb4"/></svg></button>
        <button aria-label="Help" class="ml-[30px]"><svg viewBox="0 0 24 24" class="h-6 w-6"><circle cx="12" cy="12" r="11" fill="#2243b5" stroke="#9aa2b8" stroke-width="2"/><path d="M8 9q0-4 4-4t4 4q0 2-4 5v1M12 17v3" stroke="#fff" stroke-width="2.600" fill="none"/></svg></button>
      </div>
    </div>

    <div class="flex min-h-0 flex-1 overflow-hidden">
      <!-- Folder tree -->
      <ul id="folders" class="w-[380px] shrink-0 overflow-hidden pl-[2px]"></ul>
      <div class="flex w-[26px] shrink-0 flex-col items-center bg-[#f0f0f0]">
        <svg class="mt-3 h-[6px] w-[11px] shrink-0 text-[#444]"><use href="#triup"/></svg>
        <div class="flex-[405] basis-0"></div>
        <div class="flex h-[164px] w-6 shrink-0 flex-col items-center justify-center gap-[3px] rounded-xs border border-[#8f8f8f] bg-linear-to-r from-[#f4f4f4] via-[#d6d7d9] to-[#c4c5c8]"><i class="h-[2px] w-3 bg-[#777]"></i><i class="h-[2px] w-3 bg-[#777]"></i><i class="h-[2px] w-3 bg-[#777]"></i></div>
        <div class="flex-[248] basis-0"></div>
        <svg class="mb-[10px] h-[6px] w-[11px] shrink-0 text-[#444]"><use href="#tri"/></svg>
      </div>
      <div class="w-[2px] shrink-0 bg-[#d6e5f5]"></div>

      <!-- File list -->
      <div class="min-w-0 flex-1 overflow-hidden pl-[23px]">
        <table class="w-[943px] table-fixed border-separate border-spacing-0 text-[#6d6d6d]">
          <colgroup><col class="w-[422px]"><col class="w-[194px]"><col class="w-[196px]"><col class="w-[125px]"><col class="w-[6px]"></colgroup>
          <thead class="text-left text-[#4c607a]">
            <tr class="h-[51px] align-top">
              <th class="relative bg-[linear-gradient(#dfeaf5,#fcfcfc)] bg-[length:1px_36px] bg-right-top bg-no-repeat pl-[6px] pt-[10px] font-normal">Name<svg class="absolute left-[204px] top-1 h-[6px] w-[11px] text-[#5e9fc8]"><use href="#triup"/></svg></th>
              <th class="bg-[linear-gradient(#dfeaf5,#fcfcfc)] bg-[length:1px_36px] bg-right-top bg-no-repeat pl-[10px] pt-[10px] font-normal">Date modified</th>
              <th class="bg-[linear-gradient(#dfeaf5,#fcfcfc)] bg-[length:1px_36px] bg-right-top bg-no-repeat pl-[10px] pt-[10px] font-normal">Type</th>
              <th class="pl-[10px] pt-[10px] font-normal">Size</th>
              <td class="bg-[linear-gradient(#dfeaf5,#fcfcfc)] bg-[length:1px_36px] bg-right-top bg-no-repeat"></td>
            </tr>
          </thead>
          <tbody id="files"></tbody>
        </table>
      </div>
      <div class="flex w-[25px] shrink-0 flex-col items-center bg-[#f0f0f0]">
        <svg class="mt-3 h-[6px] w-[11px] shrink-0 text-[#444]"><use href="#triup"/></svg>
        <div class="mt-[9px] flex h-[561px] w-6 flex-col items-center justify-center gap-[3px] rounded-xs border border-[#8f8f8f] bg-linear-to-r from-[#f4f4f4] via-[#d6d7d9] to-[#c4c5c8]"><i class="h-[2px] w-3 bg-[#777]"></i><i class="h-[2px] w-3 bg-[#777]"></i><i class="h-[2px] w-3 bg-[#777]"></i></div>
        <svg class="mb-[10px] mt-auto h-[6px] w-[11px] shrink-0 text-[#444]"><use href="#tri"/></svg>
      </div>
    </div>

    <!-- Details -->
    <footer class="flex h-20 shrink-0 border-t-2 border-[#cbdbea] bg-[#f0f4fc] pl-[37px] pt-2">
      <svg class="h-[61px] w-12"><use href="#bigfile"/></svg>
      <dl class="ml-[31px] grid auto-rows-[27px] grid-cols-[92px_122px_199px_auto_auto] content-start gap-x-2 whitespace-nowrap text-[#5a6779]">
        <dt class="text-black">labncfb.sas</dt><dt class="text-right">Date modified:</dt><dd class="text-[#1e395b]">12/5/2011 6:22 PM</dd><dt>Date created:</dt><dd class="text-[#1e395b]">11/9/2012 1:26 PM</dd>
        <dt>SAS File</dt><dt class="text-right">Size:</dt><dd class="text-[#1e395b]">14.3 KB</dd>
      </dl>
    </footer>
  </section>
</div>

<script>
const task = ([icon, label, active]) => `<button class="${active ? 'bg-linear-to-b from-[#d6dbe3] to-[#a9b4c4]' : 'bg-linear-to-b from-[#a9b5c5] to-[#7f90a6]'} flex h-[37px] w-[112px] items-center gap-[5px] rounded-sm border border-[#3e4b5c] pl-2 shadow-[inset_0_0_0_1px_#b9c4d2]"><svg class="h-[22px] w-[22px] shrink-0"><use href="#${icon}"/></svg><span class="whitespace-nowrap pt-1">${label}</span></button>`;
document.getElementById('tasks1').innerHTML = [['sas','SAS'],['chrome','Macro ...']].map(task).join('');
document.getElementById('tasks2').innerHTML = [['skype','Skype...'],['mon','clinical...'],['clover','macro...'],['clover','sasma...'],['clover','Roland...'],['qdoc','SAS D...'],['npp','C:\\Use...'],['bc','clinma...',true]].map(task).join('');

// One entry per row: left [name, size, modified], right [name, size, modified]
const B = 'text-[#0000f0]', G = 'text-[#808080]', R = 'text-[#ff0000]';
const rows = [
 [['aetab','26,281','7/30/2012 10:31:58 PM',B],0],
 [['allocr','1,983','7/30/2007 9:08:42 PM',G],['allocr','2,028','5/8/2011 12:01:44 PM',R]],
 [['allocw','1,964','7/30/2007 9:11:24 PM',G],['allocw','2,005','5/8/2011 12:02:20 PM',R]],
 [0,['autoexec','2,416','10/12/2009 10:53:28 PM',B]],
 [0,['closerep','7,298','5/8/2011 12:26:02 PM',B]],
 [['comblvls','4,427','12/26/2011 12:42:44 PM',B],0],
 [0,['crprotds','9,091','5/8/2011 12:12:14 PM',B]],
 [0,['crtitlesds','5,918','5/8/2011 12:14:22 PM',B]],
 [0,['ctitlepgmrk','1,730','5/8/2011 12:15:12 PM',B]],
 [['dosemerge','6,273','5/8/2011 10:47:50 AM',B],0],
 [['freqlvls','13,373','10/27/2011 6:51:58 PM',B],0],
 [0,['jobinfo','2,726','5/8/2011 12:16:16 PM',B]],
 [['labncfb','14,735','12/5/2011 6:22:44 PM',B],0],
 [0,['layout2lsps','6,381','5/8/2011 12:21:42 PM',B]],
 [['locf','7,671','5/8/2011 10:41:20 AM',B],0],
 [['nodata','2,774','3/26/2008 12:44:00 PM',B],0],
 [['npctpvals','17,274','7/18/2012 6:13:00 PM',B],0],
 [['npcttab','115,293','7/20/2012 9:46:38 PM',B],0],
 [0,['openrep','5,248','5/8/2011 12:25:40 PM',B]],
 [0,['pagexofy','7,734','5/8/2011 12:30:32 PM',B]],
 [['popfmt','26,079','1/4/2012 11:03:14 PM',B],0],
 [['prntlvls','9,269','11/2/2011 7:07:16 PM',B],0],
 [0,['proginfo','9,137','5/8/2011 12:36:32 PM',B]],
 [0,['protinfo','5,621','5/8/2011 12:42:04 PM',B]],
 [['rgpp','23,273','9/15/2012 2:40:46 PM',B],0]];
const side = (f, sel) => {
  const e = sel ? 'border-y border-dotted border-y-black' : '';
  return f ? `<td class="${e} ${f[3]} pl-[7px]"><span class="flex items-center gap-1"><i class="h-[6px] w-[5px] bg-current"></i>${f[0]}.sas</span></td><td class="${e} ${f[3]} pr-[3px] text-right">${f[1]}</td><td class="${e} ${f[3]} whitespace-nowrap border-r border-r-[#999] pl-[5px]">${f[2]}</td>`
           : `<td class="${e}"></td><td class="${e}"></td><td class="${e} border-r border-r-[#999]"></td>`;
};
document.getElementById('cmp').innerHTML = rows.map(([l, r], i) =>
  `<tr class="h-7 leading-[26px] ${i === 0 ? 'bg-[#ccffcc]' : i % 2 ? 'bg-[#f7f9f9]' : 'bg-white'}">${side(l, !i)}<td class="border-r border-r-[#999] ${i ? '' : 'border-y border-dotted border-y-black'}"></td>${side(r, !i)}</tr>`).join('');

const folders = ['cstGlobalLibrary_bk_20121003','cstQuickStart','cstQuickStartSDTMValidation','cygnus','Dwimperl','Global Standards','Go','inetpub','InnovativeTechniques','Intel','mfg','MinGW','Motorola','Octave','PerfLogs','Perl64','Program Files','Program Files (x86)','putty','Python32','Revolution','root','spectre','macros','scripts','SQC2.2.1','swshare'];
document.getElementById('folders').innerHTML = folders.map(n =>
  `<li><a href="#" class="flex h-8 w-[376px] items-center gap-2 border ${n === 'macros' ? 'rounded-sm border-[#d9d9d9] bg-linear-to-b from-[#f8f8f8] to-[#e5e5e5]' : 'border-transparent'} ${n === 'macros' || n === 'scripts' ? 'pl-[67px]' : 'pl-[57px]'}"><svg class="h-[22px] w-5"><use href="#folder"/></svg>${n}</a></li>`).join('');

const files = [['aetab','7/30/2012 11:31 PM',26],['allocr (2)','5/8/2011 1:01 PM',2],['allocr','7/30/2007 10:08 PM',2],['allocw (2)','5/8/2011 1:02 PM',2],['allocw','7/30/2007 10:11 PM',2],['autoexec','10/12/2009 11:53 PM',3],['closerep','5/8/2011 1:26 PM',8],['comblvls','12/26/2011 12:42 PM',5],['crprotds','5/8/2011 1:12 PM',9],['crtitlesds','5/8/2011 1:14 PM',6],['ctitlepgmrk','5/8/2011 1:15 PM',2],['dosemerge','5/8/2011 11:47 AM',7],['freqlvls','10/27/2011 7:51 PM',14],['jobinfo','5/8/2011 1:16 PM',3],['labncfb','12/5/2011 6:22 PM',15],['layout2lsps','5/8/2011 1:21 PM',7],['locf','5/8/2011 11:41 AM',8],['nodata','3/26/2008 1:44 PM',3],['npctpvals','7/18/2012 7:13 PM',17],['npcttab','7/20/2012 10:46 PM',113],['openrep','5/8/2011 1:25 PM',6],['pagexofy','5/8/2011 1:30 PM',8],['popfmt','1/4/2012 11:03 PM',26],['prntlvls','11/2/2011 8:07 PM',10],['proginfo','5/8/2011 1:36 PM',9],['protinfo','5/8/2011 1:42 PM',6]];
document.getElementById('files').innerHTML = files.map(([n, d, s]) => {
  const e = n === 'labncfb' ? 'border-y border-[#d9d9d9] bg-linear-to-b from-[#f8f8f8] to-[#e5e5e5]' : 'border-y border-transparent';
  return `<tr class="h-[31px]"><td class="${e} rounded-l-sm border-l pl-2 text-black"><span class="flex items-center gap-[10px]"><svg class="h-5 w-[17px]"><use href="#file"/></svg>${n}.sas</span></td><td class="${e} pl-[10px]">${d}</td><td class="${e} pl-[10px]">SAS File</td><td class="${e} rounded-r-sm border-r pr-[6px] text-right">${s} KB</td><td></td></tr>`;
}).join('');
</script>
</body>
</html>
